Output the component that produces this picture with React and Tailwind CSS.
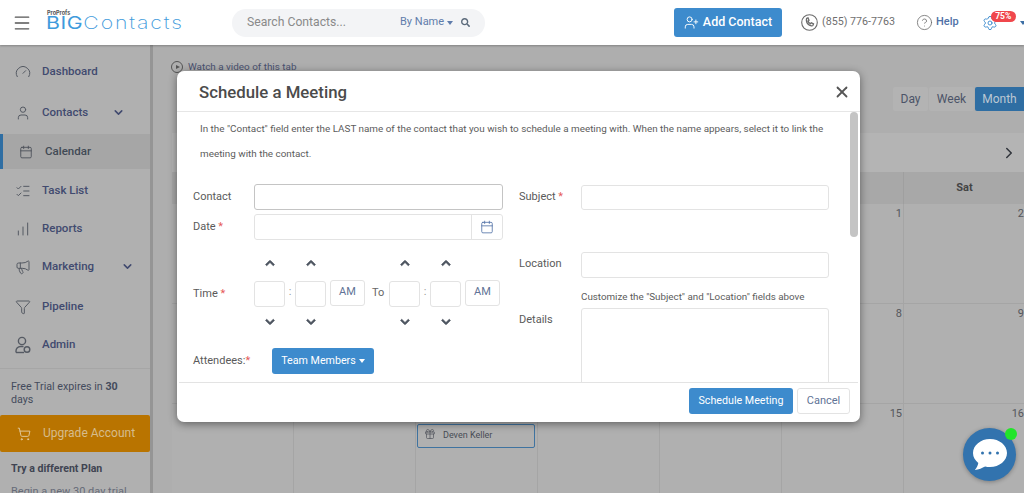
import React from 'react'
import { Gauge, User, Calendar, ListChecks, ChartNoAxesColumnIncreasing, Megaphone, Funnel, ShoppingCart, UserPlus, CircleHelp, Settings, X, ChevronRight, ChevronDown, Gift, Menu } from 'lucide-react'
import { FaChevronUp, FaChevronDown, FaSearch } from 'react-icons/fa'

function Caret({ className }) {
  return <span className={'inline-block w-0 h-0 border-x-[3.5px] border-x-transparent border-t-[4px] ' + className} />
}

function AdminIcon() {
  return (
    <svg width="16" height="18" viewBox="0 0 16 18" fill="none" stroke="#555a63" strokeWidth="1.4">
      <circle cx="7" cy="5" r="3.6" />
      <path d="M1 16.5v-1.5a4.5 4.5 0 0 1 4.5-4.5h3" />
      <path d="M1 16.5h8" />
      <circle cx="12" cy="13.5" r="2.8" />
    </svg>
  )
}

function PhoneIcon() {
  return (
    <svg width="17" height="17" viewBox="0 0 17 17" fill="none" stroke="#6b6b6b" strokeWidth="1.1">
      <circle cx="8.5" cy="8.5" r="7.8" />
      <path d="M5.6 4.4l1.4-.5 1 2.3-1 .8c.4 1.2 1.3 2.200 2.500 2.700l.9-1 2.100 1.100-.5 1.400c-.3.6-1 .8-1.600.7-2.600-.5-4.700-2.700-5-5.200 0-.7 0-1.800.2-2.300z" strokeWidth="1.300" />
    </svg>
  )
}

function NavRow({ icon, label, chevron, pad, labelWidth }) {
  return (
    <div className={'flex items-center h-[39px] shrink-0 pl-[15px] ' + pad}>
      <span className="w-[27px] flex shrink-0">{icon}</span>
      <span className={'text-[11.500px] font-medium text-[#414a6f] ' + labelWidth}>{label}</span>
      {chevron && <ChevronDown size={13} strokeWidth={2.8} className="text-[#414a6f]" />}
    </div>
  )
}

function Sidebar() {
  const ic = { size: 16, strokeWidth: 1.5, color: '#555a63' }
  return (
    <aside className="w-[153px] shrink-0 bg-[#b0b0b0] border-r-[3px] border-[#959595] flex flex-col pt-[7px] overflow-hidden">
      <NavRow icon={<Gauge {...ic} />} label="Dashboard" />
      <NavRow icon={<User {...ic} />} label="Contacts" chevron labelWidth="w-[70px]" pad="mt-[2px]" />
      <div className="h-[35px] shrink-0 flex items-center bg-[#a6a6a6] border-l-[3px] border-[#2f6ea3] pl-[16px] mt-[2px]">
        <Calendar size={14} strokeWidth={1.5} color="#4a4f58" />
        <span className="ml-[12px] text-[11.500px] font-medium text-[#414a55]">Calendar</span>
      </div>
      <NavRow icon={<ListChecks {...ic} />} label="Task List" pad="mt-[2px]" />
      <NavRow icon={<ChartNoAxesColumnIncreasing {...ic} />} label="Reports" pad="-mt-[1px]" />
      <NavRow icon={<Megaphone {...ic} />} label="Marketing" chevron pad="-mt-[1px]" labelWidth="w-[79px]" />
      <NavRow icon={<Funnel {...ic} />} label="Pipeline" pad="mt-[1px]" />
      <NavRow icon={<AdminIcon />} label="Admin" pad="-mt-[1px]" />
      <div className="mt-[4px] border-t border-[#a6a6a6] pt-[11px] px-[11px] text-[10.700px] leading-[13px] text-[#444b5c]">
        Free Trial expires in <b>30</b> days
      </div>
      <div className="mt-[9px] h-[37px] shrink-0 bg-[#b97400] rounded-[2px] flex items-center pl-[17px] gap-[12px] text-[#d6bc8c] text-[12px]">
        <ShoppingCart size={14} strokeWidth={1.5} className="text-[#e3d0ab]" />
        <span className="-mt-[1px]">Upgrade Account</span>
      </div>
      <div className="mt-[9px] px-[11px] text-[10.600px] font-bold text-[#3f4452]">Try a different Plan</div>
      <div className="mt-[7px] px-[11px] text-[11px] text-[#666b78] whitespace-nowrap">Begin a new 30 day trial</div>
    </aside>
  )
}

function Header() {
  return (
    <header className="relative z-10 h-[45px] shrink-0 bg-white shadow-[0_1px_2px_rgba(0,0,0,0.25)] flex items-center">
      <Menu size={20} strokeWidth={1.6} className="ml-[12px] shrink-0 text-[#555]" />
      <div className="ml-[14px] w-[140px] h-[30px] shrink-0 flex flex-col pt-[2px] font-['Inter']">
        <span className="text-[5.500px] leading-[6px] font-bold text-[#555] pl-[1px]">ProProfs</span>
        <span className="text-[17px] leading-[14px] tracking-[1.500px] font-extralight text-[#3f9bdc] whitespace-nowrap origin-left scale-x-[1.25]">
          <span className="font-normal tracking-[0.500px]">BIG</span>Contacts
        </span>
      </div>
      <div className="ml-[46px] w-[253px] h-[28px] rounded-full bg-[#f3f4f6] flex items-center pl-[15px] shrink-0">
        <span className="w-[153px] text-[12.200px] text-[#8a8a8a]">Search Contacts...</span>
        <span className="text-[11px] text-[#5f7cab]">By Name</span>
        <Caret className="ml-[3px] border-t-[#5f7cab]" />
        <FaSearch size={9} className="ml-[8px] text-[#5c6b7c]" />
      </div>
      <div className="ml-[189px] w-[108px] h-[29px] rounded-[3px] bg-[#3d8bcd] flex items-center justify-center gap-[4px] text-white text-[12.500px] font-medium shrink-0">
        <UserPlus size={15} strokeWidth={1.5} />
        Add Contact
      </div>
      <div className="ml-[19px] flex items-center gap-[4px] text-[10.700px] text-[#6f6f6f] shrink-0">
        <PhoneIcon />
        (855) 776-7763
      </div>
      <div className="ml-[21px] flex items-center gap-[3px] text-[11px] font-medium text-[#4f71a6] shrink-0">
        <CircleHelp size={17} strokeWidth={1.1} className="text-[#666]" />
        Help
      </div>
      <div className="relative ml-[23px] shrink-0 flex items-center">
        <Settings size={16} strokeWidth={1.4} className="text-[#3d8bcd]" />
        <span className="absolute left-[9px] -top-[4px] w-[25px] h-[11px] rounded-full bg-[#f0474c] text-white text-[8.500px] leading-[11px] font-bold text-center">75%</span>
        <Caret className="ml-[22px] border-t-[#3d6fa5]" />
      </div>
    </header>
  )
}

function Calendarview() {
  const rows = [
    ['', '', '', '', '', '1', '2'],
    ['', '', '', '', '', '8', '9'],
    ['', '', '', '', '', '15', '16'],
  ]
  return (
    <main className="flex-1 bg-[#aeaeae] pl-[19px] overflow-hidden">
      <div className="flex items-center gap-[5px] pt-[2px] h-[42px] -ml-[1px] text-[9.900px] text-[#4a5170]">
        <span className="w-[12px] h-[12px] rounded-full border border-[#555] flex items-center justify-center">
          <span className="w-0 h-0 border-y-[2.500px] border-y-transparent border-l-[4px] border-l-[#555] ml-[1px]" />
        </span>
        Watch a video of this tab
      </div>
      <div className="flex justify-end h-[24px] text-[12px] text-[#4c5468]">
        <div className="w-[35px] rounded-[2px] bg-[#b3b3b3] flex items-center justify-center">Day</div>
        <div className="ml-[1px] w-[45px] rounded-[2px] bg-[#b3b3b3] flex items-center justify-center">Week</div>
        <div className="ml-[1px] w-[49px] rounded-l-[2px] bg-[#2f6ea3] text-[#bcc8d3] flex items-center justify-center">Month</div>
      </div>
      <div className="mt-[22px] h-[39px] bg-[#b4b4b4] flex items-center justify-end pr-[6px]">
        <ChevronRight size={18} strokeWidth={2} className="text-[#30343b]" />
      </div>
      <div className="grid grid-cols-[repeat(7,122px)] w-[855px]">
        {['Sun', 'Mon', 'Tue', 'Wed', 'Thu', 'Fri', 'Sat'].map((d) => (
          <div key={d} className="h-[32px] bg-[#a8a8a8] border-r border-[#9f9f9f] flex items-center justify-center text-[11px] font-bold text-[#444]">{d}</div>
        ))}
        {rows.flat().map((n, i) => (
          <div key={i} className="relative h-[100px] bg-[#b0b0b0] border-r border-b border-[#a5a5a5] text-right pr-[1px] pt-[2px] text-[11px] text-[#55575c]">
            {n}
            {i === 16 && (
              <div className="absolute left-[1px] top-[20px] w-[118px] h-[24px] border border-[#3f73a0] rounded-[2px] flex items-center pl-[6px] gap-[7px] text-[9px] text-[#484c55] text-left">
                <Gift size={12} strokeWidth={1.300} className="-mt-[4px]" />
                <span className="-mt-[1px]">Deven Keller</span>
              </div>
            )}
          </div>
        ))}
      </div>
    </main>
  )
}

function Req() {
  return <span className="text-[#e65a5a]"> *</span>
}

function Box({ className }) {
  return <div className={'border border-[#e3e3e3] rounded-[3px] bg-white ' + className} />
}

function TimeColumn({ children }) {
  return (
    <div className="flex flex-col items-center">
      <FaChevronUp size={10} stroke="currentColor" strokeWidth={40} className="text-[#4d5560] mb-[8px]" />
      {children}
      <FaChevronDown size={10} stroke="currentColor" strokeWidth={40} className="text-[#4d5560] mt-[5px]" />
    </div>
  )
}

function TimeGroup() {
  return (
    <div className="flex items-center">
      <TimeColumn><Box className="w-[31px] h-[26px] my-[5px]" /></TimeColumn>
      <span className="w-[10px] text-center text-[11px] text-[#999]">:</span>
      <TimeColumn><Box className="w-[31px] h-[26px] my-[5px]" /></TimeColumn>
      <div className="ml-[4px] w-[35px] h-[26px] border border-[#e3e3e3] rounded-[3px] flex items-center justify-center text-[11px] text-[#5f7396]">AM</div>
    </div>
  )
}

function MeetingModal() {
  return (
    <div className="absolute left-[177px] top-[71px] w-[683px] h-[351px] bg-white rounded-[7px] shadow-[0_2px_8px_rgba(0,0,0,0.45)] flex flex-col overflow-hidden">
      <div className="h-[41px] shrink-0 flex items-center justify-between pt-[2px] pl-[22px] pr-[9px] border-b border-[#e6e6e6]">
        <span className="mt-[2px] text-[16.800px] font-medium text-[#4b4b4b]">Schedule a Meeting</span>
        <X size={18} strokeWidth={2.400} className="text-[#555]" />
      </div>
      <div className="relative h-[270px] shrink-0 overflow-hidden text-[11px] text-[#5a5a5a]">
        <div className="absolute right-[2px] top-[0px] w-[8px] h-[125px] rounded-full bg-[#c4c4c4]" />
        <p className="pl-[23px] pr-[20px] pt-[4px] text-[9.900px] leading-[25px] text-[#5c5c5c]">
          In the "Contact" field enter the LAST name of the contact that you wish to schedule a meeting with. When the name appears, select it to link the meeting with the contact.
        </p>
        <div className="flex pl-[16px] mt-[18px]">
          <div className="w-[326px] shrink-0">
            <div className="flex items-start">
              <span className="w-[61px] pt-[5px]">Contact</span>
              <Box className="w-[249px] h-[26px] !border-[#c4c4c4] !border-[1.500px]" />
            </div>
            <div className="flex items-start mt-[4px]">
              <span className="w-[61px] pt-[5px]">Date<Req /></span>
              <div className="w-[249px] h-[26px] border border-[#e3e3e3] rounded-[3px] flex justify-end">
                <div className="w-[31px] border-l border-[#e3e3e3] flex items-center justify-center">
                  <Calendar size={14} strokeWidth={1.400} className="text-[#4f6fa5]" />
                </div>
              </div>
            </div>
            <div className="flex items-center mt-[18px]">
              <span className="w-[61px] pt-[3px]">Time<Req /></span>
              <TimeGroup />
              <span className="w-[24px] pl-[7px] pt-[1px] text-[#666]">To</span>
              <TimeGroup />
            </div>
            <div className="flex items-center mt-[21px]">
              <span className="w-[79px]">Attendees:<span className="text-[#e65a5a]">*</span></span>
              <div className="w-[102px] h-[26px] rounded-[3px] bg-[#3d8bcd] text-white flex items-center justify-center gap-[3px] text-[10.700px]">
                Team Members <Caret className="border-t-white" />
              </div>
            </div>
          </div>
          <div className="w-[310px] shrink-0 pt-[1px]">
            <div className="flex items-start">
              <span className="w-[62px] pt-[4px]">Subject<Req /></span>
              <Box className="w-[248px] h-[25px]" />
            </div>
            <div className="flex items-start mt-[42px]">
              <span className="w-[62px] pt-[4px]">Location</span>
              <Box className="w-[248px] h-[26px]" />
            </div>
            <div className="pl-[62px] mt-[12px] text-[9.800px] leading-[13px] text-[#5c5c5c]">Customize the "Subject" and "Location" fields above</div>
            <div className="flex items-start mt-[5px]">
              <span className="w-[62px] pt-[4px]">Details</span>
              <Box className="w-[248px] h-[100px]" />
            </div>
          </div>
        </div>
      </div>
      <div className="mx-[2px] flex-1 border-t border-[#e3e3e3] flex items-start pt-[5px] justify-end gap-[4px] pr-[8px]">
        <div className="w-[104px] h-[26px] rounded-[3px] bg-[#3d8bcd] text-white text-[10.700px] flex items-center justify-center">Schedule Meeting</div>
        <div className="w-[53px] h-[26px] rounded-[3px] border border-[#e3e3e3] text-[#5f7396] text-[11px] flex items-center justify-center">Cancel</div>
      </div>
    </div>
  )
}

function ChatBubble() {
  return (
    <div className="absolute left-[963px] top-[428px] w-[53px] h-[53px] rounded-full bg-[#3273ae] shadow-[0_1px_4px_rgba(0,0,0,0.3)] flex items-center justify-center">
      <svg width="36" height="34" viewBox="0 0 36 34">
        <path d="M18 1C8.600 1 1 7.400 1 15c0 4 2 7.400 5.300 9.900-.5 2.600-1.700 5-3.500 7 3.900-.3 7.600-1.900 10.300-3.400 1.600.4 3.200.5 4.900.5 9.400 0 17-6.300 17-14S27.400 1 18 1z" fill="#fff" />
        <circle cx="10.500" cy="15" r="1.500" fill="#3273ae" />
        <circle cx="18" cy="15" r="1.500" fill="#3273ae" />
        <circle cx="25.500" cy="15" r="1.500" fill="#3273ae" />
      </svg>
      <span className="absolute left-[42px] top-[0px] w-[12px] h-[12px] rounded-full bg-[#22e52a]" />
    </div>
  )
}

export default function App() {
  return (
    <div className="relative w-[1024px] h-[493px] overflow-hidden flex flex-col font-['Roboto',sans-serif]">
      <Header />
      <div className="flex flex-1 min-h-0">
        <Sidebar />
        <Calendarview />
      </div>
      <MeetingModal />
      <ChatBubble />
    </div>
  )
}
